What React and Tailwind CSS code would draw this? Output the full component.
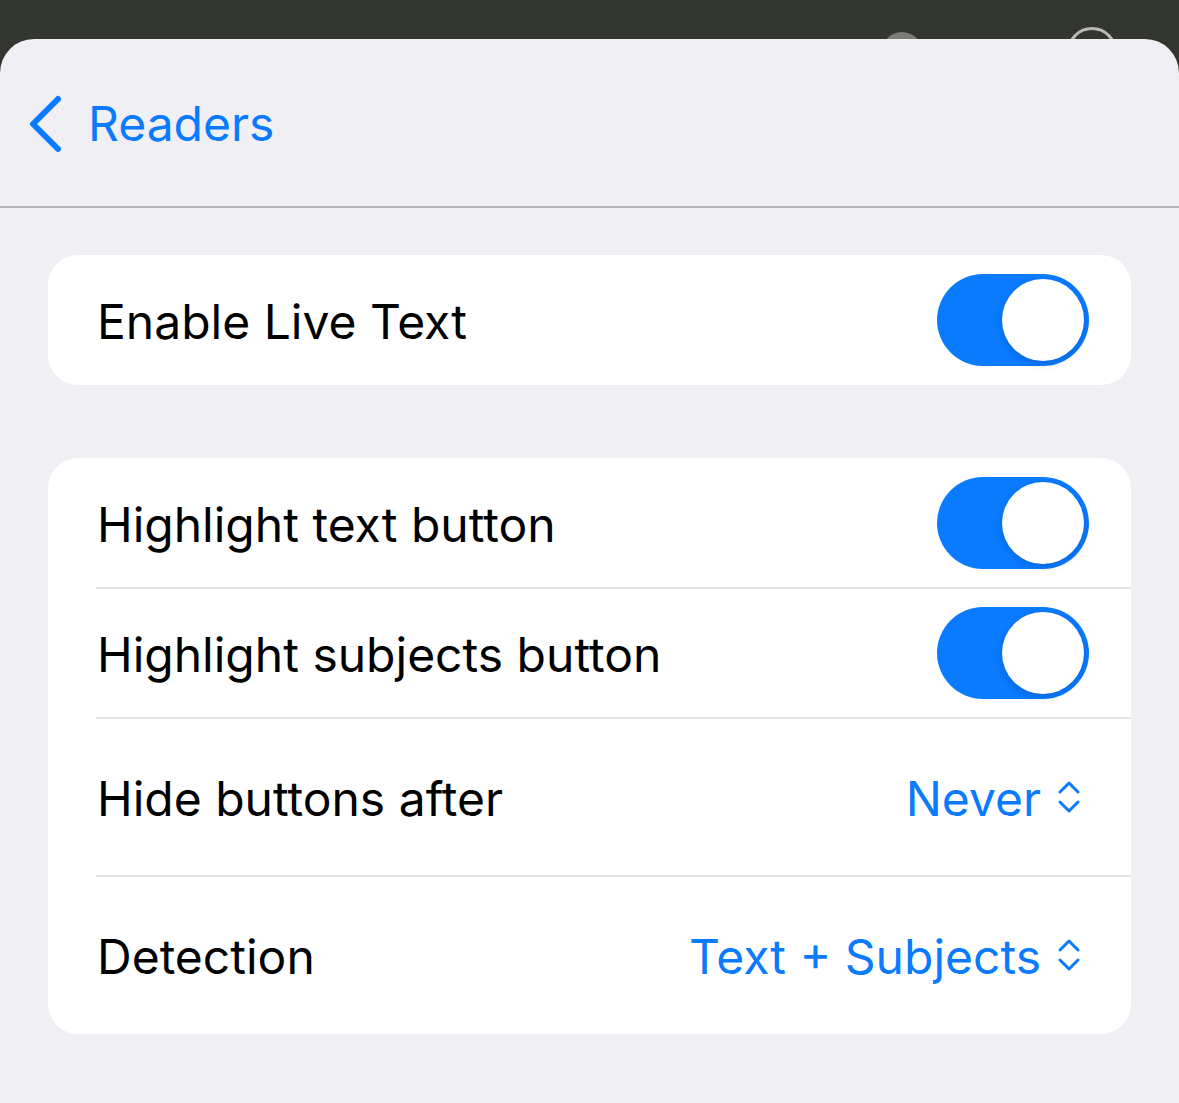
import React, { useState } from 'react';

const font = { fontFamily: 'Inter, "Noto Sans", sans-serif' };

const Toggle = ({ on, onChange }) => (
  <button
    onClick={onChange}
    className={`relative w-[152px] h-[92px] rounded-full p-[5px] flex transition-colors ${on ? 'bg-[#0a7aff] justify-end' : 'bg-[#e9e9ea] justify-start'}`}
  >
    <span className="block w-[82px] h-[82px] rounded-full bg-white shadow-[0_3px_8px_rgba(0,0,0,0.15)]" />
  </button>
);

const Chevrons = () => (
  <svg width="24" height="40" viewBox="0 0 24 40" fill="none" stroke="#0a7aff" strokeWidth="3" strokeLinecap="round" strokeLinejoin="round">
    <path d="M3 15 L12 6 L21 15" />
    <path d="M3 25 L12 34 L21 25" />
  </svg>
);

const ToggleRow = ({ label, on, onChange, last }) => (
  <div className="flex items-center h-[130px] pl-[49px] pr-[42px] relative">
    <span className="flex-1 text-[48px] text-black pt-[3px]">{label}</span>
    <Toggle on={on} onChange={onChange} />
    {!last && <div className="absolute left-[48px] right-0 bottom-[-1px] h-[2px] bg-[#e3e3e6]" />}
  </div>
);

const PickerRow = ({ label, value, last }) => (
  <div className="flex items-center h-[158px] pl-[49px] pr-[50px] relative">
    <span className="flex-1 text-[48px] text-black pt-[3px]">{label}</span>
    <span className="text-[48px] text-[#0a7aff] mr-[16px] pt-[3px]">{value}</span>
    <Chevrons />
    {!last && <div className="absolute left-[48px] right-0 bottom-[-1px] h-[2px] bg-[#e3e3e6]" />}
  </div>
);

export default function App() {
  const [live, setLive] = useState(true);
  const [hlText, setHlText] = useState(true);
  const [hlSubj, setHlSubj] = useState(true);

  return (
    <div style={font} className="w-[1179px] h-[1103px] bg-[#33352f] overflow-hidden relative">
      {/* stuff peeking behind the sheet */}
      <div className="absolute left-[882px] top-[32px] w-[40px] h-[40px] rounded-full bg-[#7a7c78]" />
      <div className="absolute left-[1067px] top-[27px] w-[50px] h-[50px] rounded-full border-[3px] border-[#b9bab6]" />

      <div className="relative mt-[39px] h-[1064px] bg-[#efeff4] rounded-t-[34px]">
        {/* header */}
        <div className="h-[169px] flex items-center pl-[28px] pt-[2px] border-b-2 border-[#b5b5b9]">
          <svg width="34" height="58" viewBox="0 0 34 58" fill="none" stroke="#0a7aff" strokeWidth="6" strokeLinecap="round" strokeLinejoin="round">
            <path d="M30 4 L5 29 L30 54" />
          </svg>
          <span className="ml-[26px] text-[48px] text-[#0a7aff]">Readers</span>
        </div>

        <div className="px-[48px] pt-[47px]">
          <div className="bg-white rounded-[30px]">
            <ToggleRow label="Enable Live Text" on={live} onChange={() => setLive(!live)} last />
          </div>

          <div className="bg-white rounded-[30px] mt-[73px]">
            <ToggleRow label="Highlight text button" on={hlText} onChange={() => setHlText(!hlText)} />
            <ToggleRow label="Highlight subjects button" on={hlSubj} onChange={() => setHlSubj(!hlSubj)} />
            <PickerRow label="Hide buttons after" value="Never" />
            <PickerRow label="Detection" value="Text + Subjects" last />
          </div>
        </div>
      </div>
    </div>
  );
}
